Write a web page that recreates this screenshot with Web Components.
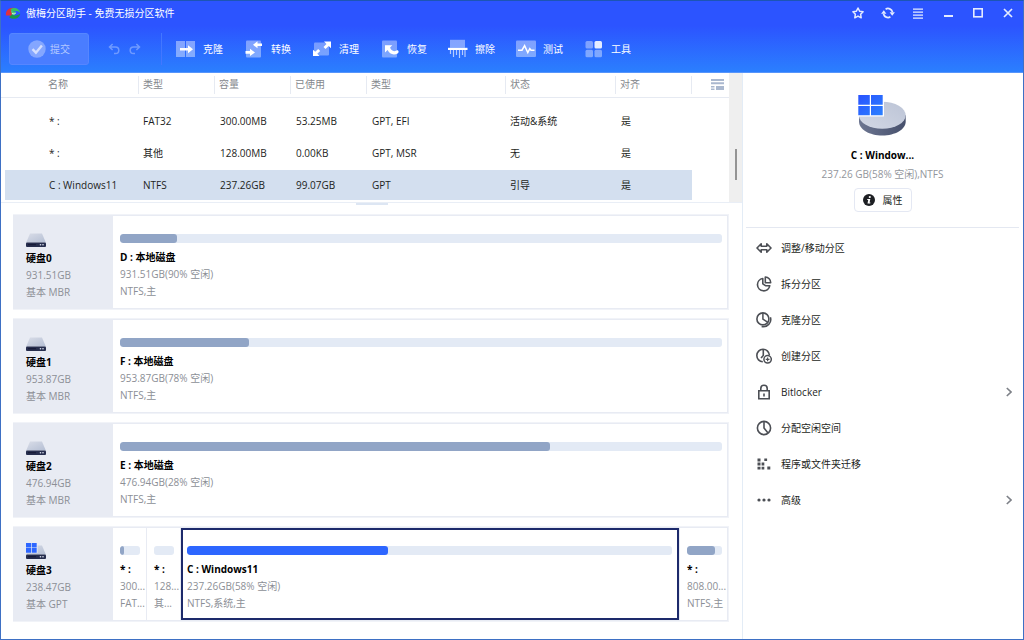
<!DOCTYPE html>
<html lang="zh-CN">
<head>
<meta charset="utf-8">
<title>傲梅分区助手 - 免费无损分区软件</title>
<style>
  html, body { margin: 0; }
  body { font: 10px/17px "Open Sans", "Noto Sans CJK SC", sans-serif; color: #1c1e22; background: #fff; }
</style>
</head>
<body>
<pm-window>
  <pm-titlebar slot="header" heading="傲梅分区助手 - 免费无损分区软件"></pm-titlebar>
  <pm-toolbar slot="header">
    <pm-tool icon="clone">克隆</pm-tool>
    <pm-tool icon="convert">转换</pm-tool>
    <pm-tool icon="clean">清理</pm-tool>
    <pm-tool icon="recover">恢复</pm-tool>
    <pm-tool icon="wipe">擦除</pm-tool>
    <pm-tool icon="test">测试</pm-tool>
    <pm-tool icon="tools">工具</pm-tool>
  </pm-toolbar>

  <pm-partition-table></pm-partition-table>

  <pm-disk-list>
    <pm-disk icon="disk" name="硬盘0" size="931.51GB" kind="基本 MBR">
      <pm-partition name="D : 本地磁盘" size="931.51GB(90% 空闲)" kind="NTFS,主" used="9.5"></pm-partition>
    </pm-disk>
    <pm-disk icon="disk" name="硬盘1" size="953.87GB" kind="基本 MBR">
      <pm-partition name="F : 本地磁盘" size="953.87GB(78% 空闲)" kind="NTFS,主" used="21.5"></pm-partition>
    </pm-disk>
    <pm-disk icon="disk" name="硬盘2" size="476.94GB" kind="基本 MBR">
      <pm-partition name="E : 本地磁盘" size="476.94GB(28% 空闲)" kind="NTFS,主" used="71.5"></pm-partition>
    </pm-disk>
    <pm-disk icon="sysdisk" name="硬盘3" size="238.47GB" kind="基本 GPT">
      <pm-partition small name="* :" size="300..." kind="FAT..." used="22"></pm-partition>
      <pm-partition small name="* :" size="128..." kind="其..." used="0"></pm-partition>
      <pm-partition selected name="C : Windows11" size="237.26GB(58% 空闲)" kind="NTFS,系统,主" used="41.5"></pm-partition>
      <pm-partition medium name="* :" size="808.00..." kind="NTFS,主" used="80"></pm-partition>
    </pm-disk>
  </pm-disk-list>

  <pm-summary slot="side" name="C : Window..." detail="237.26 GB(58% 空闲),NTFS"></pm-summary>
  <pm-action slot="side" icon="resize">调整/移动分区</pm-action>
  <pm-action slot="side" icon="split">拆分分区</pm-action>
  <pm-action slot="side" icon="copy">克隆分区</pm-action>
  <pm-action slot="side" icon="create">创建分区</pm-action>
  <pm-action slot="side" icon="lock" more>Bitlocker</pm-action>
  <pm-action slot="side" icon="allocate">分配空闲空间</pm-action>
  <pm-action slot="side" icon="migrate">程序或文件夹迁移</pm-action>
  <pm-action slot="side" icon="dots" more>高级</pm-action>
</pm-window>

<script>
const DRIVE = `<path d="M4 3.600h12l3.800 8.900H.2z" fill="url(#dg)"/><rect y="12.500" width="20" height="4.500" rx="1" fill="#262d4d"/><rect x="2" y="14.200" width="8" height="1" fill="#141833"/><circle cx="14.500" cy="14.700" r=".8" fill="#dfe4f3"/><circle cx="17" cy="14.700" r=".8" fill="#dfe4f3"/><defs><linearGradient id="dg" x1="0" y1="0" x2="1" y2="1"><stop stop-color="#d9dde8"/><stop offset="1" stop-color="#b4bed3"/></linearGradient></defs>`;

/* name: [width, height, markup] */
const ICONS = {
  logo: [16, 14, `<path d="M1 9.500C0 4.500 4.500 1 9.500 1.800 6.500 3 6 5 7.500 7.500L6 10c-1.500-.6-3-.6-5-.5z" fill="#e0303c"/><path d="M5.500 3.200C9 .8 14.500 2 15.200 7c-2-2-4-2.500-5.500-1.500C8 6.300 6.500 5.500 5.500 3.200z" fill="#37c463"/><path d="M7 8.500c2 1.500 5 1.200 8.200-.8C15 11 11.500 13.600 6.500 12.600L4 11.200z" fill="#1c9a45"/><path d="M5.800 4.200c1.500 1.600 3 2 5.700 1.600L9.300 9 7 8.800z" fill="#4fcf78"/><path d="M7 7.200c1 .8 2.400.9 3.600.2" fill="none" stroke="#e8fbe9" stroke-width=".9"/>`],
  star: [14, 14, `<path d="M7 2l1.600 3.200 3.500.5-2.500 2.500.6 3.600L7 10.100l-3.200 1.700.6-3.600L1.900 5.700l3.500-.5z" fill="none" stroke="currentColor" stroke-width="1.500" stroke-linejoin="round"/>`],
  refresh: [14, 14, `<path d="M4.600 3.200A4.600 4.600 0 0 1 11.500 6M9.400 10.800A4.600 4.600 0 0 1 2.500 8" fill="none" stroke="currentColor" stroke-width="1.700"/><path d="M8.600 6.200h5.300l-2.700 3.600zM5.400 7.800H.1l2.700-3.600z" fill="currentColor"/>`],
  menu: [14, 14, `<path d="M2 2.500h10v1.300H2zM2 5.500h10v1.300H2zM2 8.500h10v1.300H2zM2 11.500h10v1.300H2z" fill="currentColor"/>`],
  min: [14, 14, `<path d="M3 9h9v2H3z" fill="currentColor"/>`],
  max: [14, 14, `<rect x="2.800" y="2.800" width="8.400" height="8" fill="none" stroke="currentColor" stroke-width="1.600"/>`],
  close: [14, 14, `<path d="M3 3l8 8M11 3l-8 8" stroke="currentColor" stroke-width="1.700"/>`],
  check: [18, 18, `<circle cx="9" cy="9" r="8.700" fill="#fff" opacity=".32"/><path d="M4.500 9.200l3.400 3.500 6-7.200" fill="none" stroke="#d3deff" stroke-width="2.400"/>`],
  undo: [12, 12, `<path d="M2 4h5.500a3.300 3.300 0 0 1 0 6.600H6M4.600 1L1.500 4l3.100 3" fill="none" stroke="currentColor" stroke-width="1.500"/>`],
  redo: [12, 12, `<path d="M10 4H4.500a3.300 3.300 0 0 0 0 6.600H6M7.400 1l3.100 3-3.100 3" fill="none" stroke="currentColor" stroke-width="1.500"/>`],
  clone: [20, 20, `<path d="M0 2h9v16H0zM10 2h9v16h-9z" fill="#fff" opacity=".42"/><path d="M4 9h8V6.200l5 4-5 4v-2.800H4z" fill="#fff"/>`],
  convert: [20, 20, `<rect x="2" y="1.500" width="15" height="17" rx="1" fill="#fff" opacity=".4"/><path d="M18 4.500h-4.500V2.300L9 5.800l4.500 3.500V7H18zM1.500 12H6V9.800l5 3.600-5 3.600v-2.300H1.500z" fill="#fff"/>`],
  clean: [20, 20, `<rect x="2" y="3.500" width="15" height="13" rx="1" fill="#fff" opacity=".36"/><path d="M12 2.500h7v6.800l-2.300-2.200-3.200 3-2-2 3-3zM1 10.800l2.200 2 3-2.800 2 2-2.900 2.800 2.200 2.200H1z" fill="#fff"/>`],
  recover: [20, 20, `<rect x="2" y="1.500" width="15" height="17" rx="1" fill="#fff" opacity=".38"/><path d="M5 6.300h7.300l-2.200 2.300c.8 2.500 3 4.300 5.900 3.200l1-.6c1.800 0 2.200 2.200.6 3.200-3.900 2.400-8.300.6-10-3.300L5 13.500z" fill="#fff"/>`],
  wipe: [20, 20, `<path d="M2 .8h15v8H2z" fill="#fff" opacity=".42"/><path d="M0 8.800h19.500v2.200H0z" fill="#fff"/><path d="M2.500 11v4M5.500 11v7M8.500 11v5M11.500 11v8M14.500 11v5M17 11v7" stroke="#fff" stroke-width="1.200" opacity=".65"/>`],
  test: [20, 20, `<rect y="1.500" width="20" height="16.500" rx="1" fill="#fff" opacity=".4"/><path d="M2 11.200h4l2.600-4.600 3.200 7 2-4 1.200 1.600h3.500" fill="none" stroke="#fff" stroke-width="1.500"/>`],
  tools: [20, 20, `<g fill="#fff"><rect x="1.500" y="2" width="7.500" height="7.500" rx="1.500" opacity=".4"/><rect x="1.500" y="10.800" width="7.500" height="7.500" rx="1.500" opacity=".4"/><rect x="10.500" y="10.800" width="7.500" height="7.500" rx="1.500" opacity=".4"/><rect x="10.500" y="2" width="7.500" height="7.500" rx="1.500" opacity=".88"/></g>`],
  view: [13, 12, `<path d="M0 0h13v2H0zM0 3.300h13v2H0zM0 7h3.500v1.600H0zM0 9.400h3.500V11H0zM5 7h8v4H5z" fill="#aab8cf"/>`],
  disk: [20, 18, DRIVE],
  sysdisk: [20, 18, DRIVE + `<path d="M0 0h11.500v11H0z" fill="#e9ecf3"/><path d="M0 1h5v4.500H0zM5.700 1h5v4.500h-5zM0 6.100h5v4.600H0zM5.700 6.100h5v4.600h-5z" fill="#2d66ff"/>`],
  drive: [50, 42, `<defs><linearGradient id="a"><stop stop-color="#6d7691"/><stop offset="1" stop-color="#46506c"/></linearGradient><linearGradient id="b" x1="0" y1="1" x2="1" y2="0"><stop stop-color="#d3d8e5"/><stop offset="1" stop-color="#bcc4d6"/></linearGradient><linearGradient id="c" x1="0" y1="0" x2="1" y2="1"><stop stop-color="#2a53ff"/><stop offset="1" stop-color="#2b80ff"/></linearGradient></defs><path d="M1 21v6.500c0 8 10.500 14 23.300 14S47.700 35.500 47.700 27.500V21z" fill="url(#a)"/><ellipse cx="24.300" cy="21.300" rx="23.400" ry="13.500" fill="url(#b)"/><path d="M0 0h26v22.500H0z" fill="#fff"/><path d="M.3 1h11.500v9.700H.3zM13 1h11.700v9.700H13zM.3 12h11.500v9.300H.3zM13 12h11.700v9.300H13z" fill="url(#c)"/>`],
  info: [12, 12, `<circle cx="6" cy="6" r="6" fill="#1d1f23"/><circle cx="6.800" cy="3" r="1.100" fill="#fff"/><path d="M4.300 5h3L6.600 8.600l.9-.1-.3.900H4.500l.7-3.400h-1z" fill="#fff"/>`],
  resize: [16, 16, `<path d="M5.200 3.800L1 8l4.200 4.200V9.800h5.600v2.400L15 8l-4.200-4.200v2.400H5.200z" fill="none" stroke="currentColor" stroke-width="1.600" stroke-linejoin="round"/>`],
  split: [16, 16, `<path d="M6.800 2.500a6.200 6.200 0 1 0 7 7.200H9.500L6.800 7.800zM9.300 1v5.800h5.400A5.700 5.700 0 0 0 9.300 1z" fill="none" stroke="currentColor" stroke-width="1.600" stroke-linejoin="round"/>`],
  copy: [16, 16, `<circle cx="6.900" cy="6.900" r="6" fill="none" stroke="currentColor" stroke-width="1.600"/><path d="M6.900 1v6.200l4.600 3M14.400 5.200c1.800 5.400-3.200 10.600-8.800 9.300" fill="none" stroke="currentColor" stroke-width="1.500"/>`],
  create: [16, 16, `<path d="M6.800 13.800A6.300 6.300 0 1 1 13.400 7M7.300 1v6.500L5 10" fill="none" stroke="currentColor" stroke-width="1.600"/><circle cx="11.600" cy="11.300" r="3.700" fill="none" stroke="currentColor" stroke-width="1.500"/><path d="M9.700 11.300h3.800M11.600 9.400v3.800" stroke="currentColor" stroke-width="1.200"/>`],
  lock: [16, 16, `<path d="M2.800 6.800h10.400v8H2.800zM4.800 6.800V4.500a3.200 3.200 0 0 1 6.400 0v2.300M8 9.500v3" fill="none" stroke="currentColor" stroke-width="1.600"/>`],
  allocate: [16, 16, `<circle cx="8" cy="8" r="6.600" fill="none" stroke="currentColor" stroke-width="1.600"/><path d="M8 1.500V8l4 5" fill="none" stroke="currentColor" stroke-width="1.600"/>`],
  migrate: [16, 16, `<path d="M1.500 2.500h3v3h-3zM8.300 2.500h2.800v2.600H8.300zM1.500 6.600h3v3h-3zM5.600 6.600h2.700v3H5.600zM1.500 10.800h3v2.700h-3zM5.600 10.800h2.700v2.700H5.600zM11.300 10.600h3v3h-3z" fill="currentColor"/>`],
  dots: [16, 16, `<circle cx="3" cy="8" r="1.600" fill="currentColor"/><circle cx="8" cy="8" r="1.600" fill="currentColor"/><circle cx="13" cy="8" r="1.600" fill="currentColor"/>`],
  chevron: [6, 10, `<path d="M.8 1L5 5 .8 9" fill="none" stroke="#7d8087" stroke-width="1.600"/>`],
};

const RESET = `*{box-sizing:border-box}button{font:inherit;color:inherit;background:none;border:0;margin:0;padding:0;text-align:left}`;

class PmElement extends HTMLElement {
  connectedCallback() {
    if (this.shadowRoot) return;
    this.attachShadow({ mode: 'open' }).innerHTML = `<style>${RESET}${this.styles}</style>${this.render()}`;
  }
  at(name) { return this.getAttribute(name) || ''; }
}

customElements.define('pm-icon', class extends PmElement {
  get styles() { return `:host{display:block;flex:none}svg{display:block}`; }
  render() {
    const [w, h, body] = ICONS[this.at('name')];
    return `<svg width="${w}" height="${h}" viewBox="0 0 ${w} ${h}" aria-hidden="true">${body}</svg>`;
  }
});

customElements.define('pm-window', class extends PmElement {
  get styles() { return `
    :host{display:flex;flex-direction:column;min-height:100vh;border:1px solid #3e70c4;border-top-color:#1c55b5;box-sizing:border-box}
    header{background:linear-gradient(#2c54ff 35%,#2b7ffe);border-bottom:1px solid #5795fb}
    .body{display:flex;flex:1}
    main{flex:1;min-width:0}
    aside{width:281px;flex:none;border-left:1px solid #e3ecf6}`; }
  render() { return `<header><slot name="header"></slot></header><div class="body"><main><slot></slot></main><aside><slot name="side"></slot></aside></div>`; }
});

customElements.define('pm-titlebar', class extends PmElement {
  get styles() { return `
    :host{display:flex;align-items:center;height:24px;padding-left:4px;color:#fff}
    h1{font:inherit;margin:0 auto 0 5px}
    nav{display:flex}
    button{width:30px;height:24px;display:flex;align-items:center;justify-content:center;color:#e4ebff}`; }
  render() {
    const items = [['star', '收藏'], ['refresh', '刷新'], ['menu', '菜单'], ['min', '最小化'], ['max', '最大化'], ['close', '关闭']];
    return `<pm-icon name="logo"></pm-icon><h1>${this.at('heading')}</h1><nav>${items.map(([i, l]) => `<button aria-label="${l}"><pm-icon name="${i}"></pm-icon></button>`).join('')}</nav>`;
  }
});

customElements.define('pm-toolbar', class extends PmElement {
  get styles() { return `
    :host{display:flex;align-items:center;height:47px;padding:1px 0 0 8px;box-sizing:border-box;color:#fff}
    .submit{display:flex;align-items:center;justify-content:center;gap:4px;width:80px;height:32px;border-radius:3px;background:#4a7dff;border:1px solid #5686ff;color:#b3c8ff}
    .history{display:flex;gap:9px;margin:0 20px 0 19px;color:#6f9aff}
    .tools{display:flex;gap:21px;align-items:center;height:32px;border-left:1px solid #4377ff;padding-left:14px}`; }
  render() { return `<button class="submit"><pm-icon name="check"></pm-icon>提交</button>
    <div class="history"><button aria-label="撤销"><pm-icon name="undo"></pm-icon></button><button aria-label="重做"><pm-icon name="redo"></pm-icon></button></div>
    <div class="tools"><slot></slot></div>`; }
});

customElements.define('pm-tool', class extends PmElement {
  get styles() { return `:host{display:block}button{display:flex;align-items:center;gap:7px;white-space:nowrap}`; }
  render() { return `<button><pm-icon name="${this.at('icon')}"></pm-icon><slot></slot></button>`; }
});

customElements.define('pm-partition-table', class extends PmElement {
  get styles() { return `
    :host{display:flex;border-bottom:1px solid #e9eef6;padding-bottom:1px}
    .grid{flex:1;min-width:0}
    table{width:100%;table-layout:fixed;border-collapse:separate;border-spacing:0}
    col.s{width:76px}col.k{width:139px}col.m{width:110px}col.e{width:77px}
    th{height:25px;padding:0;font-weight:400;text-align:left;color:#84878d;border-bottom:1px solid #e6eaf2}
    th span{display:block;height:18px;line-height:17px;border-left:1px solid #e6eaf2;padding-left:4px}
    th:first-child span{border-left:0;padding-left:47px}
    th:last-child span{border-right:1px solid #e6eaf2}
    tbody::before{content:"";display:block;height:7px}
    td{height:32px;padding:0 0 0 5px;border:solid transparent;border-width:1px 0;background-clip:padding-box;white-space:nowrap}
    td:first-child{border-left-width:4px;padding-left:44px}
    td.num,td:last-child{padding-left:6px}
    .on td{background-color:#d3dfef}
    .view{width:37px;height:25px;border-bottom:1px solid #e6eaf2;display:flex;align-items:center;padding-left:19px}
    .bar{width:13px;background:#efefef;display:flex;justify-content:center;align-items:flex-start;margin-bottom:-1px}
    .bar i{width:2px;height:31px;margin-top:76px;background:#949494}`; }
  render() {
    const heads = ['名称', '类型', '容量', '已使用', '类型', '状态', '对齐'];
    const rows = [
      ['* :', 'FAT32', '300.00MB', '53.25MB', 'GPT, EFI', '活动&amp;系统', '是'],
      ['* :', '其他', '128.00MB', '0.00KB', 'GPT, MSR', '无', '是'],
      ['C : Windows11', 'NTFS', '237.26GB', '99.07GB', 'GPT', '引导', '是'],
    ];
    const cell = (c, i) => `<td${i > 1 && i < 5 ? ' class="num"' : ''}>${c}</td>`;
    return `<div class="grid"><table><colgroup><col><col class="s"><col class="s"><col class="s"><col class="k"><col class="m"><col class="e"></colgroup>
      <thead><tr>${heads.map(h => `<th scope="col"><span>${h}</span></th>`).join('')}</tr></thead>
      <tbody>${rows.map((r, i) => `<tr${i === 2 ? ' class="on"' : ''}>${r.map(cell).join('')}</tr>`).join('')}</tbody></table></div>
      <button class="view" aria-label="视图"><pm-icon name="view"></pm-icon></button><div class="bar"><i></i></div>`;
  }
});

customElements.define('pm-disk-list', class extends PmElement {
  get styles() { return `
    :host{display:block}
    .grip{width:32px;height:2px;margin:0 auto;background:#dde6f3}
    .list{display:flex;flex-direction:column;gap:8px;padding:9px 13px 16px 12px}`; }
  render() { return `<div class="grip"></div><div class="list"><slot></slot></div>`; }
});

customElements.define('pm-disk', class extends PmElement {
  get styles() { return `
    :host{display:flex;min-height:96px;background:#e8ebf3;border:solid #f1f3f8;border-width:1px 1px 1px 0;padding:1px 1px 1px 0;box-sizing:border-box}
    .info{width:100px;flex:none;padding:14px 0 0 13px;color:#8c8f96}
    pm-icon{margin-bottom:2px}
    b,span{display:block}b{color:#000}
    .parts{display:flex;flex:1;min-width:0;gap:1px}`; }
  render() { return `<div class="info"><pm-icon name="${this.at('icon')}"></pm-icon><b>${this.at('name')}</b><span>${this.at('size')}</span><span>${this.at('kind')}</span></div><div class="parts"><slot></slot></div>`; }
});

customElements.define('pm-partition', class extends PmElement {
  get styles() { return `
    :host{display:block;flex:1;min-width:0;background:#fff;padding:18px 0 0 7px;box-sizing:border-box;color:#8c8f96}
    :host([small]){flex:0 0 33px}
    :host([medium]){flex:0 0 47px}
    :host([selected]){border:2px solid #1d2a6b;padding:16px 0 0 4px}
    .track{height:9px;border-radius:3px;background:#e3eaf5;margin:0 5px 6px 0;overflow:hidden}
    :host([small]) .track{margin-right:6px}
    .fill{height:100%;border-radius:3px;background:#91a5c6;width:${this.at('used')}%}
    :host([selected]) .fill{background:#2d66ff}
    b,span{display:block;white-space:nowrap}b{color:#000}`; }
  render() { return `<div class="track"><div class="fill"></div></div><b>${this.at('name')}</b><span>${this.at('size')}</span><span>${this.at('kind')}</span>`; }
});

customElements.define('pm-summary', class extends PmElement {
  get styles() { return `
    :host{display:flex;flex-direction:column;align-items:center;margin:0 4px 2px 3px;padding:21px 0 15px;border-bottom:1px solid #e4e8f1}
    b{margin-top:11px;color:#000}
    span{line-height:20px;color:#93969c}
    button{display:flex;align-items:center;gap:8px;height:24px;padding:0 8px;margin-top:4px;border:1px solid #e4e8f3;border-radius:4px}`; }
  render() { return `<pm-icon name="drive"></pm-icon><b>${this.at('name')}</b><span>${this.at('detail')}</span><button><pm-icon name="info"></pm-icon>属性</button>`; }
});

customElements.define('pm-action', class extends PmElement {
  get styles() { return `
    :host{display:block}
    button{display:flex;align-items:center;gap:9px;width:100%;height:36px;padding:0 11px 0 13px}
    pm-icon{color:#4c4f55}
    .more{margin-left:auto}`; }
  render() { return `<button><pm-icon name="${this.at('icon')}"></pm-icon><slot></slot>${this.hasAttribute('more') ? '<pm-icon class="more" name="chevron"></pm-icon>' : ''}</button>`; }
});
</script>
</body>
</html>
